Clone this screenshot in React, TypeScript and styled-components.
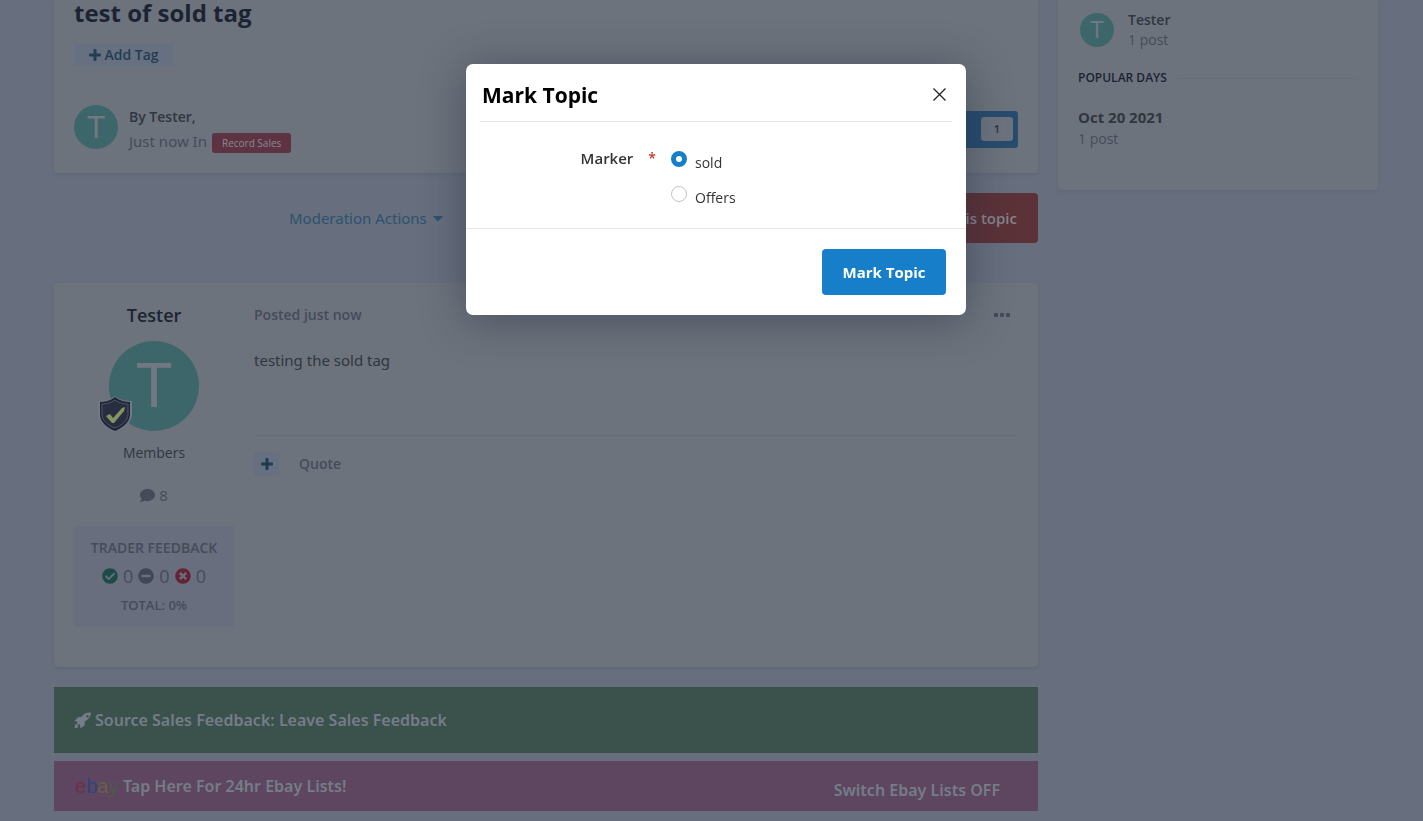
import React, { useState } from "react";
import styled, { createGlobalStyle } from "styled-components";
import {
  FaCaretDown,
  FaComment,
  FaCheckCircle,
  FaMinusCircle,
  FaTimesCircle,
} from "react-icons/fa";

const color = {
  page: "#676e7d",
  panel: "#6c737c",
  line: "#676e7a",
  shade: "#616878",
  ink: "#1c2434",
  text: "#31363f",
  muted: "#464b5a",
  teal: "#3d666b",
  letter: "#707983",
  link: "#2c5270",
};

const wide = `"Segoe UI", "Noto Sans", sans-serif`;

const GlobalStyle = createGlobalStyle`
  *, *::before, *::after { box-sizing: border-box; }
  body {
    margin: 0;
    background: ${color.page};
    color: ${color.text};
    font-family: "Segoe UI", "Open Sans", "Noto Sans", sans-serif;
    font-size: 14px;
    line-height: 20px;
  }
  h1, h2, h3, h4, p { margin: 0; }
  button { font: inherit; border: 0; padding: 0; background: none; cursor: pointer; }
  a { color: inherit; text-decoration: none; }
`;

const Page = styled.div`
  display: flex;
  align-items: flex-start;
  gap: 20px;
  min-height: 100vh;
  padding: 0 45px 10px 54px;
`;

const Main = styled.main`
  flex: 1;
  min-width: 0;
`;

const Panel = styled.section<{ $open?: boolean }>`
  background: ${color.panel};
  border-radius: ${(p) => (p.$open ? "0 0 4px 4px" : "4px")};
  box-shadow: 0 2px 3px ${color.shade};
`;

const TopicHeader = styled(Panel)`
  padding: 0 20px 20px;
`;

const TopicTitle = styled.h1`
  color: ${color.ink};
  font-size: 24px;
  font-weight: 700;
  line-height: 26px;
`;

const AddTag = styled.button`
  display: flex;
  align-items: center;
  justify-content: center;
  gap: 3px;
  width: 100px;
  height: 22px;
  margin: 18px 0 39px;
  background: #667081;
  color: #253c53;
  font-weight: 600;
`;

const Byline = styled.div`
  display: flex;
  gap: 11px;
`;

const Avatar = styled.span<{ $size: number; $font: number }>`
  flex: none;
  display: flex;
  align-items: center;
  justify-content: center;
  width: ${(p) => p.$size}px;
  height: ${(p) => p.$size}px;
  border-radius: 50%;
  background: ${color.teal};
  color: ${color.letter};
  font-family: Roboto, sans-serif;
  font-size: ${(p) => p.$font}px;
  line-height: 1;
`;

const BylineText = styled.div`
  flex: 1;
  font-size: 15px;
  line-height: 24px;
`;

const Author = styled.p`
  font-size: 14px;
  font-weight: 600;
`;

const Posted = styled.p`
  display: flex;
  align-items: flex-end;
  gap: 5px;
  color: ${color.muted};
  font-family: ${wide};
`;

const Category = styled.a`
  padding: 0 10px;
  border-radius: 3px;
  background: #5d3343;
  color: #8f8791;
  font-family: "Segoe UI", "Open Sans", sans-serif;
  font-size: 10px;
  font-weight: 500;
  line-height: 20px;
`;

const Followers = styled.button`
  display: flex;
  align-items: center;
  align-self: center;
  justify-content: space-between;
  width: 140px;
  height: 37px;
  padding: 0 5px 0 20px;
  border-radius: 3px;
  background: #284c6e;
  color: #8e97a3;
  font-weight: 600;
`;

const Count = styled.span`
  width: 32px;
  border-radius: 3px;
  background: #6d737e;
  color: #2b313d;
  font-size: 11px;
  line-height: 24px;
`;

const Actions = styled.div`
  display: flex;
  align-items: center;
  justify-content: space-between;
  margin: 20px 0 40px;
  padding-left: 235px;
`;

const Moderation = styled.button`
  display: flex;
  align-items: center;
  gap: 3px;
  color: ${color.link};
  font-family: ${wide};
  font-size: 15px;
`;

const Reply = styled.button`
  height: 50px;
  padding: 0 21px;
  border-radius: 4px;
  background: #5b3238;
  color: #86838c;
  font-size: 15px;
  font-weight: 600;
`;

const Post = styled(Panel)`
  display: flex;
  gap: 20px;
  padding: 20px 20px 40px;
`;

const AuthorPane = styled.aside`
  display: flex;
  flex-direction: column;
  align-items: center;
  width: 160px;
`;

const AuthorName = styled.h3`
  color: ${color.ink};
  font-size: 18px;
  font-weight: 600;
  line-height: 24px;
`;

const AvatarWrap = styled.div`
  position: relative;
  margin: 14px 0 12px;
`;

const Badge = styled.svg`
  position: absolute;
  left: -12px;
  bottom: -2px;
`;

const PostCount = styled.p`
  display: flex;
  align-items: center;
  gap: 4px;
  margin: 22px 0 21px;
  color: ${color.muted};
  font-size: 15px;
`;

const Feedback = styled.div`
  width: 100%;
  padding: 12px 0;
  background: #686e7e;
  color: ${color.muted};
  text-align: center;
`;

const FeedbackTitle = styled.h4`
  font-size: 14px;
  font-weight: 600;
`;

const Scores = styled.p`
  display: flex;
  align-items: center;
  justify-content: center;
  gap: 5px;
  margin: 8px 0 9px;
  font-size: 18px;
`;

const Total = styled.p`
  font-size: 13px;
  font-weight: 600;
`;

const PostBody = styled.div`
  flex: 1;
`;

const PostMeta = styled.div`
  display: flex;
  align-items: center;
  justify-content: space-between;
  padding-right: 8px;
  color: ${color.muted};
  font-weight: 600;
  line-height: 24px;
`;

const More = styled.button`
  display: flex;
`;

const PostText = styled.p`
  height: 109px;
  padding-top: 23px;
  border-bottom: 1px solid ${color.line};
  font-family: ${wide};
  font-size: 15px;
`;

const PostControls = styled.div`
  display: flex;
  align-items: center;
  gap: 20px;
  margin-top: 16px;
`;

const MultiQuote = styled.button`
  display: flex;
  align-items: center;
  justify-content: center;
  width: 25px;
  height: 24px;
  border-radius: 3px;
  background: #667080;
  color: #1f3a54;
`;

const Quote = styled.button`
  color: ${color.muted};
  font-weight: 600;
`;

const Banner = styled.div<{ $bg: string; $height: number; $top: number }>`
  display: flex;
  align-items: center;
  gap: 4px;
  height: ${(p) => p.$height}px;
  margin-top: ${(p) => p.$top}px;
  padding: 0 38px 0 20px;
  background: ${(p) => p.$bg};
  color: #747d88;
  font-family: ${wide};
  font-size: 16px;
  font-weight: 600;
`;

const Ebay = styled.span`
  width: 45px;
  padding-left: 1px;
  font-family: "Liberation Sans", Arial, sans-serif;
  font-size: 20px;
  font-weight: 400;
`;

const Letter = styled.span<{ $c: string }>`
  color: ${(p) => p.$c};
`;

const BannerLink = styled.a<{ $end?: boolean }>`
  margin-left: ${(p) => (p.$end ? "auto" : 0)};
  padding: ${(p) => (p.$end ? "8px 0 0" : "0")};
`;

const Side = styled(Panel)`
  width: 320px;
  height: 190px;
  padding: 10px 20px;
`;

const Poster = styled.div`
  display: flex;
  align-items: center;
  gap: 14px;
  padding-left: 2px;
`;

const Dim = styled.p`
  color: ${color.muted};
`;

const Name = styled.p`
  font-weight: 600;
`;

const Day = styled.div`
  line-height: 22px;
`;

const DayDate = styled.p`
  font-size: 15px;
  font-weight: 700;
`;

const SideHeading = styled.h4`
  display: flex;
  align-items: center;
  gap: 10px;
  margin: 18px 0 18px;
  color: ${color.ink};
  font-size: 12px;
  font-weight: 600;
  &::after {
    content: "";
    flex: 1;
    border-top: 1px solid ${color.line};
  }
`;

const Overlay = styled.div`
  position: fixed;
  inset: 0;
  display: flex;
  align-items: flex-start;
  justify-content: center;
  padding: 64px 0 0 9px;
`;

const Dialog = styled.form`
  width: 500px;
  border-radius: 7px;
  background: #fff;
  box-shadow: 0 5px 45px rgba(30, 38, 60, 0.45);
`;

const DialogHead = styled.header`
  display: flex;
  align-items: center;
  justify-content: space-between;
  height: 58px;
  margin: 0 14px;
  padding: 4px 5px 0 2px;
  border-bottom: 1px solid #e8e8e8;
`;

const DialogTitle = styled.h2`
  color: #000;
  font-size: 21px;
  font-weight: 700;
  line-height: 30px;
`;

const Close = styled.button`
  display: flex;
  color: #222;
`;

const Fields = styled.fieldset`
  display: flex;
  margin: 0;
  padding: 26px 0 21px;
  border: 0;
`;

const Legend = styled.div`
  display: flex;
  justify-content: flex-end;
  gap: 15px;
  width: 190px;
  color: #333;
  font-size: 15px;
  font-weight: 600;
  line-height: 20px;
`;

const Required = styled.span`
  color: #c0392b;
  font-size: 14px;
`;

const Options = styled.div`
  display: flex;
  flex-direction: column;
  gap: 11px;
  margin-left: 15px;
`;

const Option = styled.label`
  display: flex;
  gap: 8px;
  height: 24px;
  color: #333;
  line-height: 30px;
`;

const Radio = styled.input`
  appearance: none;
  width: 16px;
  height: 16px;
  margin: 3px 0 0;
  border: 1px solid #c4c4c4;
  border-radius: 50%;
  background: #fff;
  &:checked {
    border: 5px solid #177ec9;
  }
`;

const DialogFoot = styled.footer`
  display: flex;
  justify-content: flex-end;
  padding: 20px;
  border-top: 1px solid #e8e8e8;
`;

const Submit = styled.button`
  width: 124px;
  height: 46px;
  border-radius: 4px;
  background: #177ec9;
  color: #fff;
  font-size: 15px;
  font-weight: 700;
`;

const Plus = () => (
  <svg width="12" height="12" viewBox="0 0 12 12" fill="currentColor" aria-hidden="true">
    <rect x="4.500" width="3" height="12" rx="1" />
    <rect y="4.500" width="12" height="3" rx="1" />
  </svg>
);

const Dots = () => (
  <svg width="16" height="4" viewBox="0 0 16 4" fill={color.muted} aria-hidden="true">
    <rect width="4" height="4" rx="1" />
    <rect x="6" width="4" height="4" rx="1" />
    <rect x="12" width="4" height="4" rx="1" />
  </svg>
);

const Rocket = () => (
  <svg width="17" height="17" viewBox="0 0 17 17" fill="currentColor" aria-hidden="true">
    <path
      fillRule="evenodd"
      d="M17 .5C12.500.3 9.800 1.700 7.300 5L3.800 5.200.3 9.300l3.500.2-1 1.700 1.500 1.700 1.700-.9.400 4.500 4.200-3.300.2-3.600C14.500 7.200 17 4.300 17 .5zM13.500 3a1.200 1.200 0 1 1 0 2.400 1.200 1.200 0 0 1 0-2.400z"
    />
    <path d="M2.300 11.800C1 12.500.8 14 .6 16c2 0 3.200-.4 3.900-1.600z" />
  </svg>
);

const Shield = () => (
  <Badge width="36" height="38" viewBox="0 0 36 38" aria-hidden="true">
    <path d="M18 1c5 4 10 5 17 5v13c0 8-7 14-17 18C8 33 1 27 1 19V6c7 0 12-1 17-5z" fill="#727985" />
    <path d="M18 2c5 4 10 5 15 5v12c0 8-6 13-15 17C9 32 3 27 3 19V7c5 0 10-1 15-5z" fill="#1f2535" />
    <path d="M18 5c4 3 9 4 13 4v10c0 6-5 11-13 14C10 30 5 25 5 19V9c4 0 9-1 13-4z" fill="#282e40" stroke="#4d5464" />
    <path d="M9 21l4-2 3 4 9-10 3-1-1 4-10 12h-2z" fill="#84935f" />
  </Badge>
);

export default function App() {
  const [marker, setMarker] = useState("sold");
  return (
    <>
      <GlobalStyle />
      <Page>
        <Main>
          <TopicHeader $open>
            <TopicTitle>test of sold tag</TopicTitle>
            <AddTag type="button">
              <Plus /> Add Tag
            </AddTag>
            <Byline>
              <Avatar $size={44} $font={31}>T</Avatar>
              <BylineText>
                <Author>By Tester,</Author>
                <Posted>
                  Just now In <Category href="#">Record Sales</Category>
                </Posted>
              </BylineText>
              <Followers type="button">
                Followers <Count>1</Count>
              </Followers>
            </Byline>
          </TopicHeader>

          <Actions>
            <Moderation type="button">
              Moderation Actions <FaCaretDown size={16} />
            </Moderation>
            <Reply type="button">Reply to this topic</Reply>
          </Actions>

          <Post>
            <AuthorPane>
              <AuthorName>Tester</AuthorName>
              <AvatarWrap>
                <Avatar $size={90} $font={62}>T</Avatar>
                <Shield />
              </AvatarWrap>
              <p>Members</p>
              <PostCount>
                <FaComment size={15} /> 8
              </PostCount>
              <Feedback>
                <FeedbackTitle>TRADER FEEDBACK</FeedbackTitle>
                <Scores>
                  <FaCheckCircle size={16} color="#1e4b4a" /> 0
                  <FaMinusCircle size={16} color="#414755" /> 0
                  <FaTimesCircle size={16} color="#652338" /> 0
                </Scores>
                <Total>TOTAL: 0%</Total>
              </Feedback>
            </AuthorPane>
            <PostBody>
              <PostMeta>
                Posted just now
                <More type="button" aria-label="More options">
                  <Dots />
                </More>
              </PostMeta>
              <PostText>testing the sold tag</PostText>
              <PostControls>
                <MultiQuote type="button" aria-label="Multiquote">
                  <Plus />
                </MultiQuote>
                <Quote type="button">Quote</Quote>
              </PostControls>
            </PostBody>
          </Post>

          <Banner $bg="#3b524c" $height={66} $top={20}>
            <Rocket />
            <BannerLink href="#">Source Sales Feedback: Leave Sales Feedback</BannerLink>
          </Banner>
          <Banner $bg="#5e4661" $height={50} $top={8}>
            <Ebay>
              <Letter $c="#6e3044">e</Letter>
              <Letter $c="#2c4680">b</Letter>
              <Letter $c="#6a6048">a</Letter>
              <Letter $c="#505a4c">y</Letter>
            </Ebay>
            <BannerLink href="#">Tap Here For 24hr Ebay Lists!</BannerLink>
            <BannerLink href="#" $end>Switch Ebay Lists OFF</BannerLink>
          </Banner>
        </Main>

        <Side as="aside" $open>
          <Poster>
            <Avatar $size={34} $font={24}>T</Avatar>
            <div>
              <Name>Tester</Name>
              <Dim>1 post</Dim>
            </div>
          </Poster>
          <SideHeading>POPULAR DAYS</SideHeading>
          <Day>
            <DayDate>Oct 20 2021</DayDate>
            <Dim>1 post</Dim>
          </Day>
        </Side>
      </Page>

      <Overlay>
        <Dialog role="dialog" aria-labelledby="dialog-title" onSubmit={(e) => e.preventDefault()}>
          <DialogHead>
            <DialogTitle id="dialog-title">Mark Topic</DialogTitle>
            <Close type="button" aria-label="Close">
              <svg width="15" height="15" viewBox="0 0 15 15" stroke="currentColor" strokeWidth="1.3" aria-hidden="true">
                <path d="M1.5 1.5l12 12M13.5 1.5l-12 12" />
              </svg>
            </Close>
          </DialogHead>
          <Fields role="radiogroup" aria-labelledby="marker-label">
            <Legend>
              <span id="marker-label">Marker</span>
              <Required>*</Required>
            </Legend>
            <Options>
              {["sold", "Offers"].map((name) => (
                <Option key={name}>
                  <Radio
                    type="radio"
                    name="marker"
                    checked={marker === name}
                    onChange={() => setMarker(name)}
                  />
                  {name}
                </Option>
              ))}
            </Options>
          </Fields>
          <DialogFoot>
            <Submit type="submit">Mark Topic</Submit>
          </DialogFoot>
        </Dialog>
      </Overlay>
    </>
  );
}
